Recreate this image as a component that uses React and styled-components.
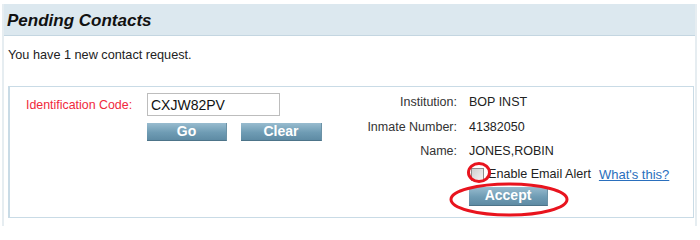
import React from 'react'
import styled, { createGlobalStyle } from 'styled-components'

const GlobalStyle = createGlobalStyle`
    body {
        margin: 0;
        background: #fff;
        font-family: "Liberation Sans", Arial, sans-serif;
        color: #333;
    }
`;

function Annotations() {
    // red pen marks drawn on top of the screenshot
    return (
        <Marks width="700" height="226" viewBox="0 0 700 226">
            <ellipse cx="479" cy="172.5" rx="10.5" ry="9" fill="none" stroke="#e8141e" strokeWidth="3" />
            <ellipse cx="509" cy="199.5" rx="58" ry="15.5" fill="none" stroke="#e8141e" strokeWidth="3" />
        </Marks>
    )
}

function App() {
    return (
        <Page>
            <GlobalStyle />
            <Panel>
                <Header>Pending Contacts</Header>
                <Intro>You have 1 new contact request.</Intro>
                <RequestBox>
                    <CodeSection>
                        <CodeRow>
                            <CodeLabel>Identification Code:</CodeLabel>
                            <CodeInput defaultValue="CXJW82PV" />
                        </CodeRow>
                        <ButtonRow>
                            <ActionButton $width={80}>Go</ActionButton>
                            <ActionButton $width={81}>Clear</ActionButton>
                        </ButtonRow>
                    </CodeSection>
                    <DetailsSection>
                        <DetailLabel>Institution:</DetailLabel>
                        <DetailValue>BOP INST</DetailValue>
                        <DetailLabel>Inmate Number:</DetailLabel>
                        <DetailValue>41382050</DetailValue>
                        <DetailLabel>Name:</DetailLabel>
                        <DetailValue>JONES,ROBIN</DetailValue>
                        <span />
                        <AlertRow>
                            <AlertCheck type="checkbox" />
                            <span>Enable Email Alert</span>
                            <HelpLink href="#">What's this?</HelpLink>
                        </AlertRow>
                        <span />
                        <AcceptCell>
                            <ActionButton $width={79} $height={19}>Accept</ActionButton>
                        </AcceptCell>
                    </DetailsSection>
                </RequestBox>
            </Panel>
            <Annotations />
        </Page>
    )
}

const Page = styled.div`
    position: relative;
    width: 700px;
    height: 226px;
    padding: 4px 3px 0 2px;
    box-sizing: border-box;
    overflow: hidden;
`;

const Panel = styled.div`
    height: 100%;
    border-left: 2px solid #e6edf1;
    border-right: 2px solid #e6edf1;
`;

const Header = styled.h2`
    margin: 0;
    height: 31px;
    line-height: 33px;
    padding-left: 3px;
    background: #dce8ef;
    border-bottom: 1px solid #c4d6e1;
    font-size: 17px;
    font-weight: bold;
    font-style: italic;
    color: #111;
`;

const Intro = styled.p`
    margin: 12px 0 0 4px;
    font-size: 12.7px;
    line-height: 15px;
    color: #222;
`;

const RequestBox = styled.div`
    display: flex;
    margin: 23px 1px 0 4px;
    height: 130px;
    border: 1px solid #c9dbe6;
    border-left-width: 2px;
`;

const CodeSection = styled.div`
    width: 340px;
    padding: 6px 0 0 16px;
    box-sizing: border-box;
`;

const CodeRow = styled.div`
    display: flex;
    align-items: center;
`;

const CodeLabel = styled.label`
    width: 121px;
    font-size: 12.4px;
    color: #f0283c;
`;

const CodeInput = styled.input`
    width: 133px;
    height: 23px;
    box-sizing: border-box;
    padding: 0 3px;
    border: 1px solid #bdbdbd;
    font-family: "Liberation Sans", Arial, sans-serif;
    font-size: 14px;
    color: #111;
    outline: none;
`;

const ButtonRow = styled.div`
    display: flex;
    gap: 14px;
    margin: 7px 0 0 121px;
`;

const ActionButton = styled.button`
    width: ${p => p.$width}px;
    height: ${p => p.$height || 18}px;
    padding: 0;
    border: none;
    border-bottom: 1px solid #4d7489;
    border-right: 1px solid #6b92a6;
    background: linear-gradient(#98bccf, #6f9cb4 55%, #5e8ba4);
    color: #fff;
    font-family: "Liberation Sans", Arial, sans-serif;
    font-size: 14px;
    font-weight: bold;
    line-height: 17px;
    cursor: pointer;
`;

const DetailsSection = styled.div`
    display: grid;
    grid-template-columns: 107px auto;
    grid-template-rows: 24.5px 24.5px 24.5px 21px auto;
    column-gap: 12px;
    align-items: center;
    align-content: start;
    padding-top: 3px;
    font-size: 12.5px;
    color: #333;
`;

const DetailLabel = styled.span`
    text-align: right;
`;

const DetailValue = styled.span`
    color: #222;
`;

const AlertRow = styled.div`
    display: flex;
    align-items: center;
    height: 21px;
    font-size: 12.6px;
    color: #222;
`;

const AlertCheck = styled.input`
    appearance: none;
    width: 13px;
    height: 13px;
    margin: 0 4px 0 2px;
    border: 1px solid #8e8e8e;
    background: linear-gradient(135deg, #cfcfcf, #f4f4f4);
`;

const HelpLink = styled.a`
    margin-left: 8px;
    font-size: 13px;
    color: #2a6fbd;
    text-decoration: underline;
`;

const AcceptCell = styled.div`
    align-self: start;
    margin-top: 2px;
`;

const Marks = styled.svg`
    position: absolute;
    top: 0;
    left: 0;
    pointer-events: none;
`;

export default App
